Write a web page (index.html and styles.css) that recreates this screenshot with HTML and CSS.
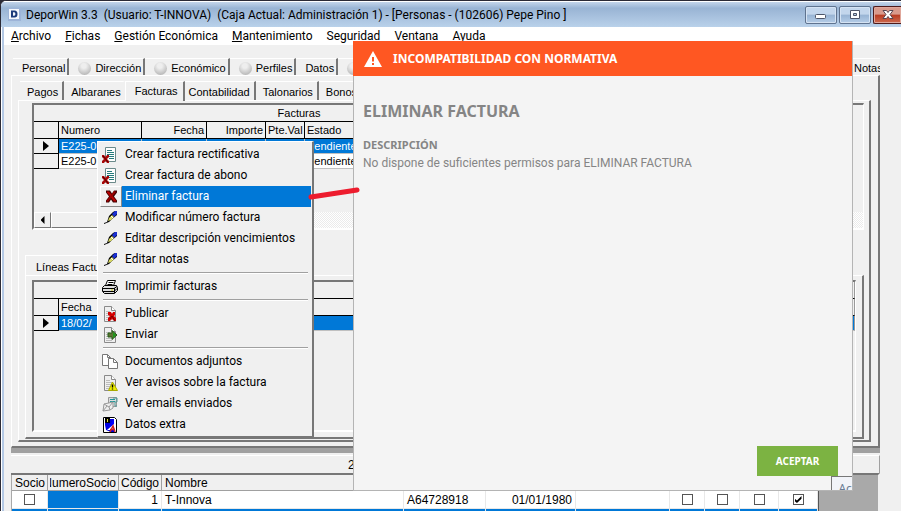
FILE: index.html
```html
<!DOCTYPE html>
<html lang="es">
<head>
  <meta charset="UTF-8" />
  <meta name="viewport" content="width=device-width, initial-scale=1" />
  <title>DeporWin 3.3</title>
  <link rel="stylesheet" href="styles.css">
</head>
<body>
  <div class="window">
    <header class="titlebar">
      <svg class="app-icon" width="13" height="13" viewBox="0 0 13 13">
        <rect width="13" height="13" fill="#9db4d8"/>
        <rect x="1" y="1" width="10" height="10" fill="#f4f7fc"/>
        <path d="M3 2.5h3.5a3 3.5 0 0 1 0 7H3zM5 4.2v3.6h1.2a1.2 1.8 0 0 0 0-3.6z" fill="#1d3c7c" fill-rule="evenodd"/>
      </svg>
      <span class="caption">DeporWin 3.3&nbsp; (Usuario: T-INNOVA)&nbsp; (Caja Actual: Administración 1) - [Personas - (102606) Pepe Pino ]</span>
      <div class="window-buttons">
        <button aria-label="Minimizar"><svg width="12" height="10" viewBox="0 0 12 10"><rect x=".5" y="4.5" width="10" height="4" rx="1" fill="#fff" stroke="#4d5568"/></svg></button>
        <button aria-label="Maximizar"><svg width="12" height="10" viewBox="0 0 12 10"><path d="M1.500 .5h9v8h-9zM4.500 3.500h3v2h-3z" fill="#fff" fill-rule="evenodd" stroke="#4d5568"/></svg></button>
        <button class="close" aria-label="Cerrar"><svg width="12" height="10" viewBox="0 0 12 10"><path d="M1 .5h3.500L6 2.500 7.500.5H11L8 4.500l3 4H7.500L6 6.500l-1.500 2H1l3-4z" fill="#fff" stroke="#5a4650"/></svg></button>
      </div>
    </header>

    <nav class="menubar">
      <a href="#"><u>A</u>rchivo</a>
      <a href="#"><u>F</u>ichas</a>
      <a href="#"><u>G</u>estión Económica</a>
      <a href="#"><u>M</u>antenimiento</a>
      <a href="#">Seguridad</a>
      <a href="#">Ventana</a>
      <a href="#">Ayuda</a>
    </nav>

    <main class="workspace">
      <div class="tabs outer-tabs">
        <button>Personal</button>
        <button><i class="led"></i>Dirección</button>
        <button><i class="led"></i>Económico</button>
        <button><i class="led"></i>Perfiles</button>
        <button>Datos</button>
        <button><i class="led"></i></button>
        <button class="last">Notas</button>
      </div>

      <div class="sheet outer-sheet">
        <div class="tabs inner-tabs">
          <button>Pagos</button>
          <button class="before-active">Albaranes</button>
          <button class="active">Facturas</button>
          <button class="after-active">Contabilidad</button>
          <button>Talonarios</button>
          <button>Bonos</button>
        </div>

        <div class="sheet inner-sheet">
          <div class="grid-box invoices">
            <table class="grid invoice-table">
              <colgroup><col class="mark"><col class="c-num"><col class="c-date"><col class="c-amount"><col class="c-pending"><col></colgroup>
              <thead>
                <tr><th colspan="6" class="grid-title">Facturas</th></tr>
                <tr><th></th><th>Numero</th><th class="right">Fecha</th><th class="right">Importe</th><th>Pte.Val</th><th>Estado</th></tr>
              </thead>
              <tbody>
                <tr class="current"><td class="marker"><i class="arrow"></i></td><td>E225-0</td><td></td><td></td><td></td><td>Pendiente</td></tr>
                <tr><td class="marker"></td><td>E225-0</td><td></td><td></td><td></td><td>Pendiente</td></tr>
              </tbody>
            </table>
            <div class="hscroll">
              <button aria-label="Desplazar a la izquierda"><i class="arrow left"></i></button>
              <div class="thumb"></div>
            </div>
          </div>

          <div class="lines">
            <div class="tabs lines-tabs"><button>Líneas Facturas</button></div>
            <div class="sheet lines-sheet">
              <div class="grid-box line-grid">
                <table class="grid">
                  <colgroup><col class="mark"><col></colgroup>
                  <thead>
                    <tr><th colspan="2" class="grid-title"></th></tr>
                    <tr><th></th><th>Fecha</th></tr>
                  </thead>
                  <tbody>
                    <tr class="current"><td class="marker"><i class="arrow"></i></td><td>18/02/</td></tr>
                  </tbody>
                </table>
              </div>
            </div>
          </div>
        </div>
      </div>

      <div class="splitter"></div>
      <div class="counter">2</div>

      <div class="people">
        <table>
          <colgroup><col class="p-socio"><col class="p-num"><col class="p-cod"><col class="p-name"><col class="p-nif"><col class="p-date"><col class="p-free"><col class="p-c1"><col class="p-c1"><col class="p-c2"><col class="p-c2"></colgroup>
          <thead>
            <tr><th>Socio</th><th class="cut"><span>NumeroSocio</span></th><th class="cut"><span>Código</span></th><th>Nombre</th><th></th><th></th><th></th><th></th><th></th><th></th><th></th></tr>
          </thead>
          <tbody>
            <tr>
              <td class="center"><input type="checkbox" aria-label="Socio"></td>
              <td class="blue"></td>
              <td class="right">1</td>
              <td>T-Innova</td>
              <td>A64728918</td>
              <td class="right">01/01/1980</td>
              <td></td>
              <td class="center"><input type="checkbox" aria-label="Opción 1"></td>
              <td class="center"><input type="checkbox" aria-label="Opción 2"></td>
              <td class="center"><input type="checkbox" aria-label="Opción 3"></td>
              <td class="center"><input type="checkbox" aria-label="Opción 4" checked></td>
            </tr>
            <tr class="selected"><td></td><td></td><td></td><td></td><td></td><td></td><td></td><td></td><td></td><td></td><td></td></tr>
          </tbody>
        </table>
      </div>
    </main>

    <!-- menú contextual de la factura -->
    <div class="context-menu" role="menu">
      <button role="menuitem"><svg viewBox="0 0 16 16"><use href="#doc-x"/></svg><span>Crear factura rectificativa</span></button>
      <button role="menuitem"><svg viewBox="0 0 16 16"><use href="#doc-x"/></svg><span>Crear factura de abono</span></button>
      <button role="menuitem" class="hot"><svg viewBox="0 0 16 16"><path d="M3 2h4l2 3 2-3h3v2l-3 4 3 4v2h-4l-2-3-2 3H3v-2l3-4-3-4z" fill="#400"/><path d="M4 3h2l7 9v1h-2L4 4z" fill="#b80000"/><path d="M12 3 4 13" stroke="#900" stroke-width="2"/></svg><span>Eliminar factura</span></button>
      <button role="menuitem"><svg viewBox="0 0 16 16"><use href="#pen"/></svg><span>Modificar número factura</span></button>
      <button role="menuitem"><svg viewBox="0 0 16 16"><use href="#pen"/></svg><span>Editar descripción vencimientos</span></button>
      <button role="menuitem"><svg viewBox="0 0 16 16"><use href="#pen"/></svg><span>Editar notas</span></button>
      <hr>
      <button role="menuitem"><svg viewBox="0 0 16 16"><path d="M5.500 1.500h8l-2 5h-8z" fill="#fff" stroke="#000"/><path d="M6.500 3.500h5M5.500 5.500h5" stroke="#000"/><path d="M2.500 6.500h12l1 2v3l-3 3h-10l-2-2v-4z" fill="#ddd" stroke="#000"/><path d="M1 9.500h11l3-2M1 12.500h11l3-3M12.500 9v5" fill="none" stroke="#000"/><path d="M9 11h2" stroke="#cc0" stroke-width="1"/></svg><span>Imprimir facturas</span></button>
      <hr>
      <button role="menuitem"><svg viewBox="0 0 16 16"><use href="#page"/><path d="M6 6h3l1 2 1-2h2v3l-1 1 2 2v3h-2l-2-2-2 2H6v-3l2-2-2-1z" fill="#d40000"/><path d="M8 13l2-3 3 5" fill="none" stroke="#700"/></svg><span>Publicar</span></button>
      <button role="menuitem"><svg viewBox="0 0 16 16"><use href="#page"/><path d="M6 6h4V3.500L15 8l-5 4.500V10H6z" fill="#5c7431" stroke="#245a18"/><path d="M11 5l3 3-3 3z" fill="#1c9a1c"/></svg><span>Enviar</span></button>
      <hr>
      <button role="menuitem"><svg viewBox="0 0 16 16"><path d="M.5.500h5l3 3v8h-8z" fill="#fff" stroke="#777"/><path d="M5.500.500v3h3" fill="none" stroke="#777"/><path d="M6.500 4.500h5l4 4v6h-9z" fill="#fff" stroke="#777"/><path d="M11.500 4.500v4h4" fill="none" stroke="#777"/></svg><span>Documentos adjuntos</span></button>
      <button role="menuitem"><svg viewBox="0 0 16 16"><use href="#page"/><path d="M10.500 7l5 8.500h-9z" fill="#ee0" stroke="#aa0"/><path d="M10.500 9.500v3M10.500 13.500v1" stroke="#000" stroke-width="1.400"/></svg><span>Ver avisos sobre la factura</span></button>
      <button role="menuitem"><svg viewBox="0 0 16 16"><path d="M6.500 1.500h8v9h-8z" fill="#ddd" stroke="#999"/><path d="M8 3.500h5M8 5.500h5" stroke="#299"/><path d="M11 2h4v4h-2v4h2" fill="none" stroke="#599"/><path d="M2 8l9-2v6l-3 2-7 1z" fill="#eee" stroke="#999"/><path d="M2 8l5 3 4-5M1 15l4-5M8 14l-1-3" fill="none" stroke="#999"/></svg><span>Ver emails enviados</span></button>
      <button role="menuitem"><svg viewBox="0 0 16 16"><path d="M1.500.500h11l2 2v13h-13z" fill="#fff" stroke="#000"/><path d="M3 2h9v13H9L4 13 3 8z" fill="#00d"/><path d="M3 1h5v5H3z" fill="#000"/><path d="M5 2h1v3H5z" fill="#dd3"/><path d="M12 2l-7 9 7-4z" fill="#00f"/><path d="M5 13l7-6v6z" fill="#fff"/><path d="M8 15l3-6 2 6M8 12.500h5" fill="none" stroke="#c22" stroke-width="1.500"/></svg><span>Datos extra</span></button>
    </div>

    <!-- aviso de permisos -->
    <section class="dialog" role="alertdialog" aria-labelledby="aviso">
      <header>
        <svg width="18" height="16" viewBox="0 0 18 16"><path d="M9 0l9 16H0z" fill="#fff"/><path d="M8 6h2v4.500H8zM8 12h2v2H8z" fill="#ff5722"/></svg>
        <h1 id="aviso">INCOMPATIBILIDAD CON NORMATIVA</h1>
      </header>
      <div class="dialog-body">
        <h2>ELIMINAR FACTURA</h2>
        <h3>DESCRIPCIÓN</h3>
        <p>No dispone de suficientes permisos para ELIMINAR FACTURA</p>
      </div>
      <footer><button>ACEPTAR</button></footer>
      <div class="tooltip">Aceptar</div>
    </section>

    <svg class="pointer-line" width="52" height="14" viewBox="0 0 52 14"><path d="M3 11L49 4" stroke="#ed1c2e" stroke-width="5" stroke-linecap="round"/></svg>
  </div>

  <svg class="symbols" width="0" height="0" aria-hidden="true">
    <symbol id="doc-x" viewBox="0 0 16 16">
      <path d="M3.500.5h10v14h-10z" fill="#fff" stroke="#6b8a8a"/>
      <path d="M5 3.500h5M5 5.500h7M5 7.500h7M6 9.500h6M7 11.500h5" stroke="#257c7c"/>
      <path d="M0 8h2l1.500 2L5 8h2v2l-2 2 2 2v2H5l-1.500-2L2 16H0v-2l2-2-2-2z" fill="#a80808"/>
      <path d="M1 9l5 6" stroke="#500"/>
    </symbol>
    <symbol id="pen" viewBox="0 0 16 16">
      <path d="M2 13l3-1 2-6 4-4 2-1h2v4l-5 4-3 3-5 2z" fill="#000"/>
      <path d="M10 4l3-3h2v3l-3 3z" fill="#1a2fd0"/>
      <path d="M7 8l3-3 2 2-3 3-3 1z" fill="#d8d860"/>
      <path d="M9 6l2 2" stroke="#fff"/>
    </symbol>
    <symbol id="page" viewBox="0 0 16 16">
      <path d="M2.500.5h7l4 4v11h-11z" fill="#efefef" stroke="#8a8a8a"/>
      <path d="M9.500.5v4h4" fill="#fff" stroke="#8a8a8a"/>
      <path d="M4 5.500h4M4 7.500h7M4 9.500h7M4 11.500h7M4 13.500h6" stroke="#bbb"/>
    </symbol>
  </svg>
</body>
</html>
```
FILE: styles.css
```css
* {
  box-sizing: border-box;
}
body {
  margin: 0;
  height: 100vh;
  overflow: hidden;
  background: #2b2a35;
  font-family: "Liberation Sans", Arial, sans-serif;
  font-size: 11px;
  color: #000;
}
button {
  font: inherit;
  color: inherit;
  border: 0;
  padding: 0;
  background: none;
}
.symbols {
  position: absolute;
}

/* ventana principal */
.window {
  position: relative;
  display: flex;
  flex-direction: column;
  height: 100vh;
  overflow: hidden;
  border-top: 1px solid #2b2a35;
  border-left: 1px solid #2b2a35;
  border-radius: 6px 0 0 0;
  background: #f0f0f0;
  box-shadow: inset 1px 1px 0 #fff, inset 3px 0 0 #b3c8e4;
}
.titlebar {
  display: flex;
  align-items: center;
  height: 26px;
  flex: none;
  padding-left: 7px;
  border-top: 1px solid #fff;
  background: linear-gradient(#c3d5ea, #99b4d4 25%, #b9d1ea);
  font-family: Roboto, sans-serif;
  font-size: 12px;
}
.app-icon {
  margin-right: 5px;
}
.caption {
  flex: 1;
  white-space: nowrap;
}
.window-buttons {
  display: flex;
  gap: 2px;
}
.window-buttons button {
  display: flex;
  align-items: center;
  justify-content: center;
  width: 32px;
  height: 18px;
  border: 1px solid #5f738f;
  border-radius: 2px;
  background: linear-gradient(#c3d6ec 45%, #98b4d4 50%, #b5cde8);
  box-shadow: inset 0 0 0 1px #d5e3f3;
}
.window-buttons .close {
  width: 28px;
  border-color: #4e1a1a;
  border-right: 0;
  border-radius: 2px 0 0 2px;
  background: linear-gradient(#d99a8c 45%, #b93c22 50%, #cd6a50);
  box-shadow: inset 0 0 0 1px #e0a79b;
}
.menubar {
  display: flex;
  align-items: center;
  gap: 14px;
  height: 18px;
  flex: none;
  margin-left: 3px;
  padding-left: 7px;
  background: #fff;
  font-family: Roboto, sans-serif;
  font-size: 12px;
}
.menubar a {
  color: #000;
  text-decoration: none;
}

/* pestañas */
.workspace {
  flex: none;
  margin: 12px 21px 0 10px;
}
.tabs {
  display: flex;
  align-items: flex-end;
  height: 18px;
}
.tabs button {
  display: flex;
  align-items: center;
  flex: none;
  height: 17px;
  padding: 2px 4px 0 7px;
  border-top: 1px solid #fff;
  border-right: 2px solid #777;
}
.tabs .last {
  flex: 0 0 27px;
  margin-left: auto;
  padding-left: 1px;
  border-right: 0;
  overflow: hidden;
}
.outer-tabs {
  padding-left: 2px;
}
.outer-tabs button {
  padding-left: 9px;
  padding-right: 2px;
}
.led {
  width: 13px;
  height: 13px;
  margin-right: 4px;
  border-radius: 50%;
  background: radial-gradient(circle at 45% 30%, #eee 20%, #bbb 75%, #999);
}
.sheet {
  border: 1px solid #fff;
  border-right: 2px solid #777;
  border-bottom: 2px solid #777;
}
.outer-sheet {
  padding: 4px 7px 4px 6px;
}
.inner-tabs {
  height: 20px;
  padding-left: 2px;
}
.inner-tabs button {
  height: 19px;
}
.inner-tabs .before-active {
  padding-right: 2px;
  border-right-color: transparent;
}
.inner-tabs .active {
  height: 20px;
  margin-bottom: -1px;
  padding: 0 5px 2px 9px;
  border-left: 1px solid #fff;
  background: #f0f0f0;
}
.inner-tabs .after-active {
  padding-left: 4px;
}
.inner-sheet {
  padding: 2px 5px 1px 6px;
}

/* rejillas */
.grid-box {
  border: 2px solid #777;
  border-right: 1px solid #fff;
  border-bottom: 2px solid #fff;
  overflow: hidden;
}
.invoices {
  display: flex;
  flex-direction: column;
  height: 127px;
  margin-left: 7px;
}
.grid {
  width: 100%;
  table-layout: fixed;
  border-collapse: separate;
  border-spacing: 0;
}
.invoice-table {
  width: 531px;
}
.grid th,
.grid td {
  height: 15px;
  padding: 0 2px;
  border-right: 1px solid #000;
  border-bottom: 1px solid #000;
  font-weight: normal;
  line-height: 13px;
  text-align: left;
  white-space: nowrap;
  overflow: hidden;
}
.grid th {
  height: 17px;
}
.grid .grid-title {
  text-align: center;
}
.grid td {
  background: #fff;
  border-color: #c0c0c0;
}
.grid .marker {
  border-color: #000;
  background: #f0f0f0;
}
.grid .right {
  text-align: right;
}
.grid .current td:not(.marker) {
  background: #0078d7;
  color: #fff;
}
.line-grid th:last-child,
.line-grid td:last-child {
  border-right-color: #999;
}
.mark {
  width: 25px;
}
.c-num {
  width: 83px;
}
.c-date {
  width: 65px;
}
.c-amount {
  width: 59px;
}
.c-pending {
  width: 39px;
}
.arrow {
  display: block;
  width: 6px;
  height: 10px;
  margin: 0 auto;
  background: #000;
  clip-path: polygon(0 0, 100% 50%, 0 100%);
}
.arrow.left {
  width: 4px;
  height: 8px;
  clip-path: polygon(100% 0, 0 50%, 100% 100%);
}
.hscroll {
  display: flex;
  height: 16px;
  margin-top: auto;
  background: repeating-conic-gradient(#fff 0 25%, #ebebeb 0 50%) 0 0 / 2px 2px;
}
.hscroll button,
.thumb {
  width: 17px;
  border: 1px solid #fff;
  border-right-color: #777;
  border-bottom-color: #777;
  background: #f0f0f0;
}
.thumb {
  width: 200px;
}
.lines {
  margin-top: 25px;
}
.lines-tabs {
  height: 20px;
}
.lines-tabs button {
  height: 20px;
  padding-left: 10px;
  border-left: 1px solid #fff;
}
.lines-sheet {
  padding: 4px 6px 5px 6px;
}
.line-grid {
  height: 152px;
}

/* zona inferior */
.splitter {
  height: 5px;
  background: #a0a0a0;
}
.counter {
  height: 18px;
  margin-top: 2px;
  padding: 2px 0 0 337px;
  border-top: 1px solid #fff;
  border-right: 1px solid #a0a0a0;
  font-size: 12px;
  line-height: 14px;
}
.people {
  padding-left: 1px;
  border-top: 2px solid #777;
  border-right: 2px solid #f0f0f0;
  background: #a9a9a9;
}
.people table {
  width: 807px;
  table-layout: fixed;
  border-collapse: separate;
  border-spacing: 0;
  border-right: 1px solid #555;
  background: #fff;
  font-size: 12px;
}
.people th,
.people td {
  height: 18px;
  padding: 0 3px;
  border-right: 1px solid #e8e8e8;
  border-bottom: 1px solid #e8e8e8;
  font-weight: normal;
  line-height: 14px;
  text-align: left;
  white-space: nowrap;
  overflow: hidden;
}
.people th {
  height: 16px;
  border-color: #a0a0a0;
  background: #f0f0f0;
}
.people .cut {
  padding: 0 2px;
}
.people .cut span {
  display: flex;
  justify-content: flex-end;
  overflow: hidden;
}
.people .right {
  text-align: right;
}
.people .center {
  padding: 0;
  text-align: center;
}
.people .blue,
.people .selected td {
  background: #0078d7;
}
.p-socio {
  width: 36px;
}
.p-num {
  width: 71px;
}
.p-cod {
  width: 43px;
}
.p-name {
  width: 242px;
}
.p-nif {
  width: 82px;
}
.p-date {
  width: 90px;
}
.p-free {
  width: 94px;
}
.p-c1 {
  width: 35px;
}
.p-c2 {
  width: 39px;
}
.people input {
  display: block;
  appearance: none;
  width: 11px;
  height: 11px;
  margin: 0 auto;
  border: 1px solid #555;
  background: #fff;
}
.people input:checked::after {
  content: "";
  display: block;
  width: 7px;
  height: 7px;
  margin: 1px;
  background: #000;
  clip-path: polygon(0 35%, 35% 65%, 100% 0, 100% 40%, 35% 100%, 0 70%);
}

/* menú contextual */
.context-menu {
  position: absolute;
  top: 140px;
  left: 96px;
  width: 217px;
  padding: 2px 1px 1px 2px;
  border: 1px solid #fff;
  border-right: 2px solid #777;
  border-bottom: 2px solid #777;
  background: #f0f0f0;
  font-family: Roboto, sans-serif;
  font-size: 12px;
}
.context-menu button {
  display: flex;
  width: 100%;
  height: 21px;
  align-items: center;
  gap: 3px;
  line-height: 21px;
  text-align: left;
  white-space: nowrap;
}
.context-menu svg {
  flex: none;
  width: 16px;
  height: 16px;
  margin: 0 0 0 2px;
}
.context-menu span {
  flex: 1;
  padding-left: 4px;
}
.context-menu .hot {
  gap: 0;
}
.context-menu .hot svg {
  width: 22px;
  height: 21px;
  margin: 0;
  padding: 1px 2px;
  border: 1px solid #fff;
  border-right-color: #888;
  border-bottom-color: #888;
}
.context-menu .hot span {
  padding-left: 3px;
  background: #0078d7;
  color: #fff;
}
.context-menu hr {
  height: 2px;
  margin: 2px 3px;
  border: 0;
  border-top: 1px solid #a0a0a0;
  border-bottom: 1px solid #fff;
}

/* aviso */
.dialog {
  position: absolute;
  top: 40px;
  left: 352px;
  right: 48px;
  display: flex;
  flex-direction: column;
  height: 450px;
  overflow: hidden;
  border-right: 1px solid #b4b4b4;
  border-bottom: 1px solid #b4b4b4;
  background: #f4f4f4;
  box-shadow: inset 1px 0 0 #b4b4b4;
  font-family: "Noto Sans", sans-serif;
  font-size: 12px;
  color: #858585;
}
.dialog header {
  display: flex;
  align-items: center;
  gap: 11px;
  height: 35px;
  margin-right: -1px;
  padding-left: 11px;
  background: #ff5722;
  color: #fff;
}
.dialog h1 {
  margin: 0;
  font-size: 12px;
}
.dialog-body {
  flex: 1;
  padding: 24px 10px;
}
.dialog h2 {
  margin: 0;
  font-size: 16px;
  line-height: 22px;
}
.dialog h3 {
  margin: 14px 0 0;
  font-size: 11px;
  line-height: 18px;
}
.dialog p {
  margin: 0;
  font-family: Roboto, sans-serif;
  line-height: 18px;
}
.dialog footer {
  display: flex;
  justify-content: flex-end;
  padding: 0 14px 14px;
}
.dialog footer button {
  width: 81px;
  height: 30px;
  background: #7cb342;
  color: #fff;
  font-size: 10px;
  font-weight: bold;
}
.tooltip {
  position: absolute;
  top: 435px;
  right: -35px;
  padding: 4px 4px 2px 6px;
  border: 1px solid #777;
  background: #f1f3f8;
  color: #6a7c94;
  line-height: 16px;
}

/* trazo que une la opción con el aviso */
.pointer-line {
  position: absolute;
  top: 185px;
  left: 307px;
}
```
